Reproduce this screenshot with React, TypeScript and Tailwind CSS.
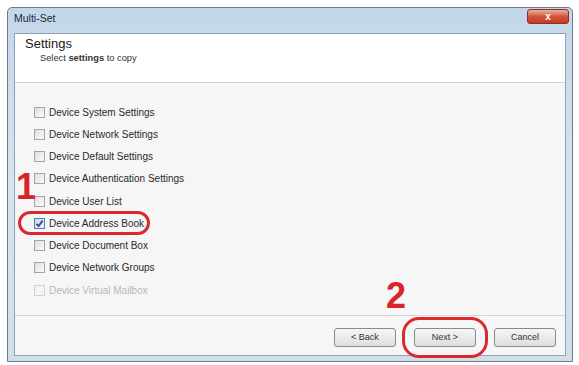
const items = [
  { label: "Device System Settings" },
  { label: "Device Network Settings" },
  { label: "Device Default Settings" },
  { label: "Device Authentication Settings" },
  { label: "Device User List" },
  { label: "Device Address Book", checked: true },
  { label: "Device Document Box" },
  { label: "Device Network Groups" },
  { label: "Device Virtual Mailbox", disabled: true },
];

function Checkbox({ checked, disabled }: { checked?: boolean; disabled?: boolean }) {
  return (
    <span
      className={`flex h-[11px] w-[11px] items-center justify-center border ${
        disabled
          ? "border-[#d2d2d2] bg-[#f4f4f4]"
          : checked
            ? "border-[#5b7fa8] bg-gradient-to-br from-[#c9d9ec] to-[#eef3f9]"
            : "border-[#a4a4a4] bg-gradient-to-br from-[#dedede] to-[#fbfbfb]"
      }`}
    >
      {checked ? (
        <svg width="9" height="9" viewBox="0 0 9 9">
          <path d="M1.5 4.8 L3.6 7 L7.6 1.6" fill="none" stroke="#2b4f8c" strokeWidth="1.8" />
        </svg>
      ) : null}
    </span>
  );
}

function Button({ children }: { children: React.ReactNode }) {
  return (
    <div className="flex h-[19px] w-[62px] items-center justify-center rounded-[3px] border border-[#8a8a8a] bg-gradient-to-b from-[#f6f6f6] to-[#dedede] text-[9px] text-[#333]">
      {children}
    </div>
  );
}

export default function App() {
  return (
    <div className="relative h-[365px] w-[579px] overflow-hidden bg-white pl-[7px] pt-[7px] font-['Liberation_Sans',Arial,sans-serif]">
      {/* window frame */}
      <div className="flex h-[355px] w-[566px] flex-col rounded-t-[5px] border border-[#6c7b8b] bg-gradient-to-b from-[#c3d7ea] via-[#d6e4f0] to-[#d2dfeb] px-[6px] pb-[5px]">
        <div className="flex h-[25px] items-start justify-between">
          <span className="pt-[3px] text-[10.5px] text-[#1e2a38]">Multi-Set</span>
          <div className="-mr-[3px] mt-[1px] flex h-[15px] w-[42px] items-center justify-center rounded-[3px] border border-[#8a3224] bg-gradient-to-b from-[#eab0a0] via-[#d4553e] to-[#c2391f] text-[10px] font-bold leading-none text-white">
            x
          </div>
        </div>

        {/* client area */}
        <div className="flex flex-1 flex-col border border-[#8fa2b6] bg-[#f6f6f6]">
          <div className="h-[49px] border-b border-[#d2d2d2] bg-white">
            <div className="pl-[10px] pt-[2px] text-[13px] leading-[15px] text-[#1a1a1a]">Settings</div>
            <div className="pl-[25px] pt-[2px] text-[9.3px] leading-[11px] text-[#333]">
              Select <span className="font-bold">settings</span> to copy
            </div>
          </div>

          <div className="flex-1 pl-[19px] pt-[18px]">
            {items.map((it) => (
              <div key={it.label} className="flex h-[22.25px] items-center gap-[4px]">
                <Checkbox checked={it.checked} disabled={it.disabled} />
                <span className={`text-[10px] ${it.disabled ? "text-[#b8b8b8]" : "text-[#2a2a2a]"}`}>
                  {it.label}
                </span>
              </div>
            ))}
          </div>

          <div className="flex h-[40px] justify-end gap-[18px] border-t border-[#d6d6d6] pr-[9px] pt-[12px]">
            <Button>&lt; Back</Button>
            <Button>Next &gt;</Button>
            <Button>Cancel</Button>
          </div>
        </div>
      </div>

      {/* annotations */}
      <span className="absolute left-[16px] top-[169px] text-[36px] font-bold leading-none text-[#d9232a]">1</span>
      <span className="absolute left-[386px] top-[278px] text-[36px] font-bold leading-none text-[#d9232a]">2</span>
      <div className="absolute left-[18px] top-[211px] h-[24px] w-[132px] rounded-full border-[3px] border-[#db2a2f]" />
      <div className="absolute left-[402px] top-[317px] h-[41px] w-[86px] rounded-[17px] border-[3px] border-[#db2a2f]" />
    </div>
  );
}
